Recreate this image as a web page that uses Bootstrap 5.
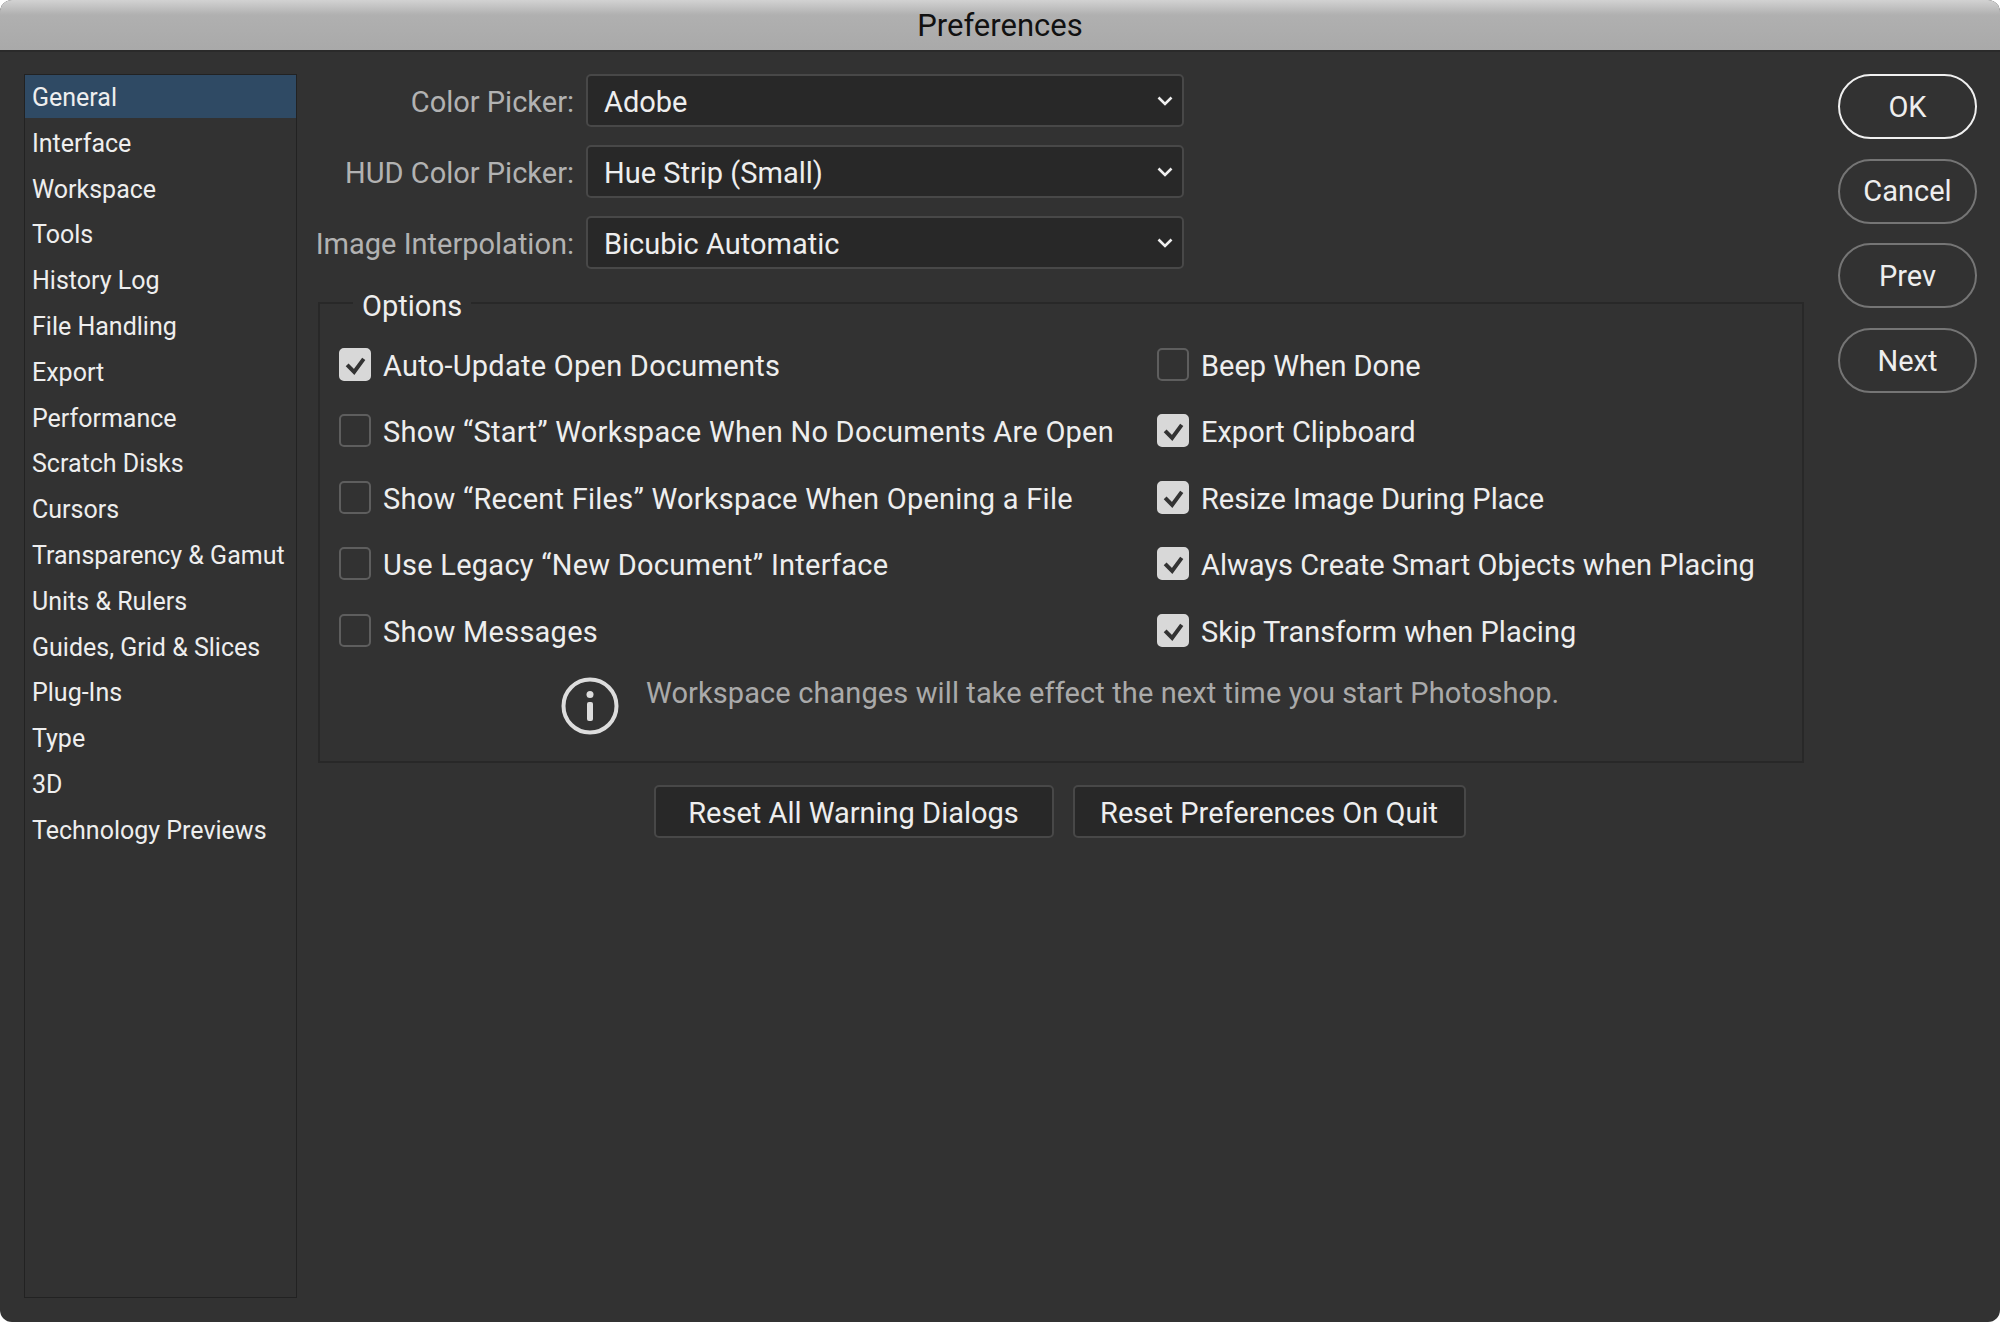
<!DOCTYPE html>
<html lang="en">
<head>
    <meta charset="UTF-8">
    <title>Preferences</title>
    <link href="https://cdn.jsdelivr.net/npm/bootstrap@5.3.2/dist/css/bootstrap.min.css" rel="stylesheet">
    <style>
        body { background: #fff; font-family: Roboto, "Liberation Sans", sans-serif; font-size: 29px; color: #eee; overflow: hidden; }
        .pref-window { height: 1322px; background: #323232; border-radius: 12px; overflow: hidden; }
        .pref-title { height: 52px; line-height: 51px; text-align: center; color: #111; font-size: 31px; background: linear-gradient(#d2d2d2, #b0b0b0 30%, #a9a9a9); border-bottom: 2px solid #2a2a2a; }
        .pref-main { padding: 22px 24px 24px; }
        .pref-side { width: 273px; height: 1224px; border: 1px solid #222; border-radius: 0; background: transparent; flex: none; }
        .pref-side .list-group-item { background: transparent; border: 0; border-radius: 0; color: #eee; height: 45.8px; line-height: 41px; padding: 2px 7px 0; font-size: 25px; white-space: nowrap; }
        .pref-side .list-group-item.active { background: #2f4a64; color: #eee; height: 43px; margin-bottom: 2.8px; }
        .pref-center { width: 1486px; margin-left: 21px; flex: none; }
        .pref-form-row { height: 71px; align-items: flex-start; }
        .pref-form-row label { width: 257px; margin-right: 12px; padding-top: 12px; margin-left: -1px; color: #b2b2b2; white-space: nowrap; font-size: 29px; line-height: 32px; display: flex; justify-content: flex-end; }
        .pref-select.form-select { width: 598px; height: 53px; background-color: #282828; color: #eee; border: 2px solid #484848; border-radius: 5px; font-size: 29px; padding: 5px 30px 0 16px; background-image: url("data:image/svg+xml,%3csvg xmlns='http://www.w3.org/2000/svg' viewBox='0 0 16 10'%3e%3cpath fill='none' stroke='%23eee' stroke-width='2.6' d='M1.5 1.5 8 8l6.5-6.5'/%3e%3c/svg%3e"); background-size: 16px 10px; background-position: right 9px center; }
        .pref-options { margin: -3px 0 0; height: 479px; border: 2px solid #282828; padding: 0 0 0 19px; }
        .pref-options legend { float: none; width: auto; margin: 0 0 0 14px; padding: 6px 9px 0; font-size: 29px; line-height: 32px; color: #eee; }
        .pref-check-col { width: 818px; flex: none; }
        .pref-check-col .form-check-label { letter-spacing: .25px; }
        .pref-check { height: 66.4px; margin: 0; padding: 0; align-items: flex-start; white-space: nowrap; }
        .pref-check .form-check-input { width: 32px; height: 33px; margin: 0 12px 0 0; flex: none; float: none; background-color: #323232; border: 2px solid #5e5e5e; border-radius: 5px; }
        .pref-check .form-check-input:checked { background-color: #d8d8d8; border-color: #d8d8d8; background-image: url("data:image/svg+xml,%3csvg xmlns='http://www.w3.org/2000/svg' viewBox='0 0 32 33'%3e%3cpath fill='none' stroke='%23333' stroke-width='4.5' d='M7 17l8 8 11-15'/%3e%3c/svg%3e"); background-size: 100% 100%; }
        .pref-check .form-check-label { line-height: 36px; font-size: 29px; }
        .pref-checks { padding-top: 26px; }
        .pref-note { margin-left: 222px; margin-top: -3px; color: #aaa; line-height: 32px; font-size: 29px; white-space: nowrap; letter-spacing: .1px; }
        .pref-note svg { margin-right: 27px; flex: none; }
        .pref-resets { margin-top: 22px; gap: 19px; padding-right: 3px; }
        .pref-reset.btn { height: 53px; background: #282828; color: #eee; border: 2px solid #484848; border-radius: 5px; font-size: 29px; padding: 4px 0 0; }
        .pref-side-btns { width: 139px; margin-left: 34px; gap: 19.67px; flex: none; }
        .pref-pill.btn { height: 65px; background: transparent; color: #eee; border: 2px solid #757575; font-size: 29px; padding: 2px 0 0; }
        .pref-pill.btn.pref-default { border-color: #f0f0f0; }
    </style>
</head>
<body>
    <div class="pref-window">
        <div class="pref-title">Preferences</div>
        <div class="pref-main d-flex">
            <div class="list-group pref-side">
                <a class="list-group-item active">General</a>
                <a class="list-group-item">Interface</a>
                <a class="list-group-item">Workspace</a>
                <a class="list-group-item">Tools</a>
                <a class="list-group-item">History Log</a>
                <a class="list-group-item">File Handling</a>
                <a class="list-group-item">Export</a>
                <a class="list-group-item">Performance</a>
                <a class="list-group-item">Scratch Disks</a>
                <a class="list-group-item">Cursors</a>
                <a class="list-group-item">Transparency &amp; Gamut</a>
                <a class="list-group-item">Units &amp; Rulers</a>
                <a class="list-group-item">Guides, Grid &amp; Slices</a>
                <a class="list-group-item">Plug-Ins</a>
                <a class="list-group-item">Type</a>
                <a class="list-group-item">3D</a>
                <a class="list-group-item">Technology Previews</a>
            </div>

            <div class="pref-center">
                <div class="d-flex pref-form-row">
                    <label for="colorPicker">Color Picker:</label>
                    <select class="form-select pref-select" id="colorPicker"><option>Adobe</option></select>
                </div>
                <div class="d-flex pref-form-row">
                    <label for="hudPicker">HUD Color Picker:</label>
                    <select class="form-select pref-select" id="hudPicker"><option>Hue Strip (Small)</option></select>
                </div>
                <div class="d-flex pref-form-row">
                    <label for="interpolation">Image Interpolation:</label>
                    <select class="form-select pref-select" id="interpolation"><option>Bicubic Automatic</option></select>
                </div>

                <fieldset class="pref-options">
                    <legend>Options</legend>
                    <div class="d-flex pref-checks">
                        <div class="pref-check-col">
                            <div class="form-check d-flex pref-check"><input class="form-check-input" type="checkbox" id="c1" checked><label class="form-check-label" for="c1">Auto-Update Open Documents</label></div>
                            <div class="form-check d-flex pref-check"><input class="form-check-input" type="checkbox" id="c2"><label class="form-check-label" for="c2">Show “Start” Workspace When No Documents Are Open</label></div>
                            <div class="form-check d-flex pref-check"><input class="form-check-input" type="checkbox" id="c3"><label class="form-check-label" for="c3">Show “Recent Files” Workspace When Opening a File</label></div>
                            <div class="form-check d-flex pref-check"><input class="form-check-input" type="checkbox" id="c4"><label class="form-check-label" for="c4">Use Legacy “New Document” Interface</label></div>
                            <div class="form-check d-flex pref-check"><input class="form-check-input" type="checkbox" id="c5"><label class="form-check-label" for="c5">Show Messages</label></div>
                        </div>
                        <div>
                            <div class="form-check d-flex pref-check"><input class="form-check-input" type="checkbox" id="c6"><label class="form-check-label" for="c6">Beep When Done</label></div>
                            <div class="form-check d-flex pref-check"><input class="form-check-input" type="checkbox" id="c7" checked><label class="form-check-label" for="c7">Export Clipboard</label></div>
                            <div class="form-check d-flex pref-check"><input class="form-check-input" type="checkbox" id="c8" checked><label class="form-check-label" for="c8">Resize Image During Place</label></div>
                            <div class="form-check d-flex pref-check"><input class="form-check-input" type="checkbox" id="c9" checked><label class="form-check-label" for="c9">Always Create Smart Objects when Placing</label></div>
                            <div class="form-check d-flex pref-check"><input class="form-check-input" type="checkbox" id="c10" checked><label class="form-check-label" for="c10">Skip Transform when Placing</label></div>
                        </div>
                    </div>
                    <div class="d-flex pref-note">
                        <svg width="58" height="58" viewBox="0 0 58 58">
                            <circle cx="29" cy="29" r="26.5" fill="none" stroke="#ddd" stroke-width="4"/>
                            <circle cx="29" cy="17.5" r="3.5" fill="#ddd"/>
                            <rect x="26" y="25" width="6" height="19" rx="2" fill="#ddd"/>
                        </svg>
                        <span>Workspace changes will take effect the next time you start Photoshop.</span>
                    </div>
                </fieldset>

                <div class="d-flex justify-content-center pref-resets">
                    <button type="button" class="btn pref-reset" style="width: 400px">Reset All Warning Dialogs</button>
                    <button type="button" class="btn pref-reset" style="width: 393px">Reset Preferences On Quit</button>
                </div>
            </div>

            <div class="d-flex flex-column pref-side-btns">
                <button type="button" class="btn rounded-pill pref-pill pref-default">OK</button>
                <button type="button" class="btn rounded-pill pref-pill">Cancel</button>
                <button type="button" class="btn rounded-pill pref-pill">Prev</button>
                <button type="button" class="btn rounded-pill pref-pill">Next</button>
            </div>
        </div>
    </div>
    <script src="https://cdn.jsdelivr.net/npm/bootstrap@5.3.2/dist/js/bootstrap.bundle.min.js"></script>
</body>
</html>
